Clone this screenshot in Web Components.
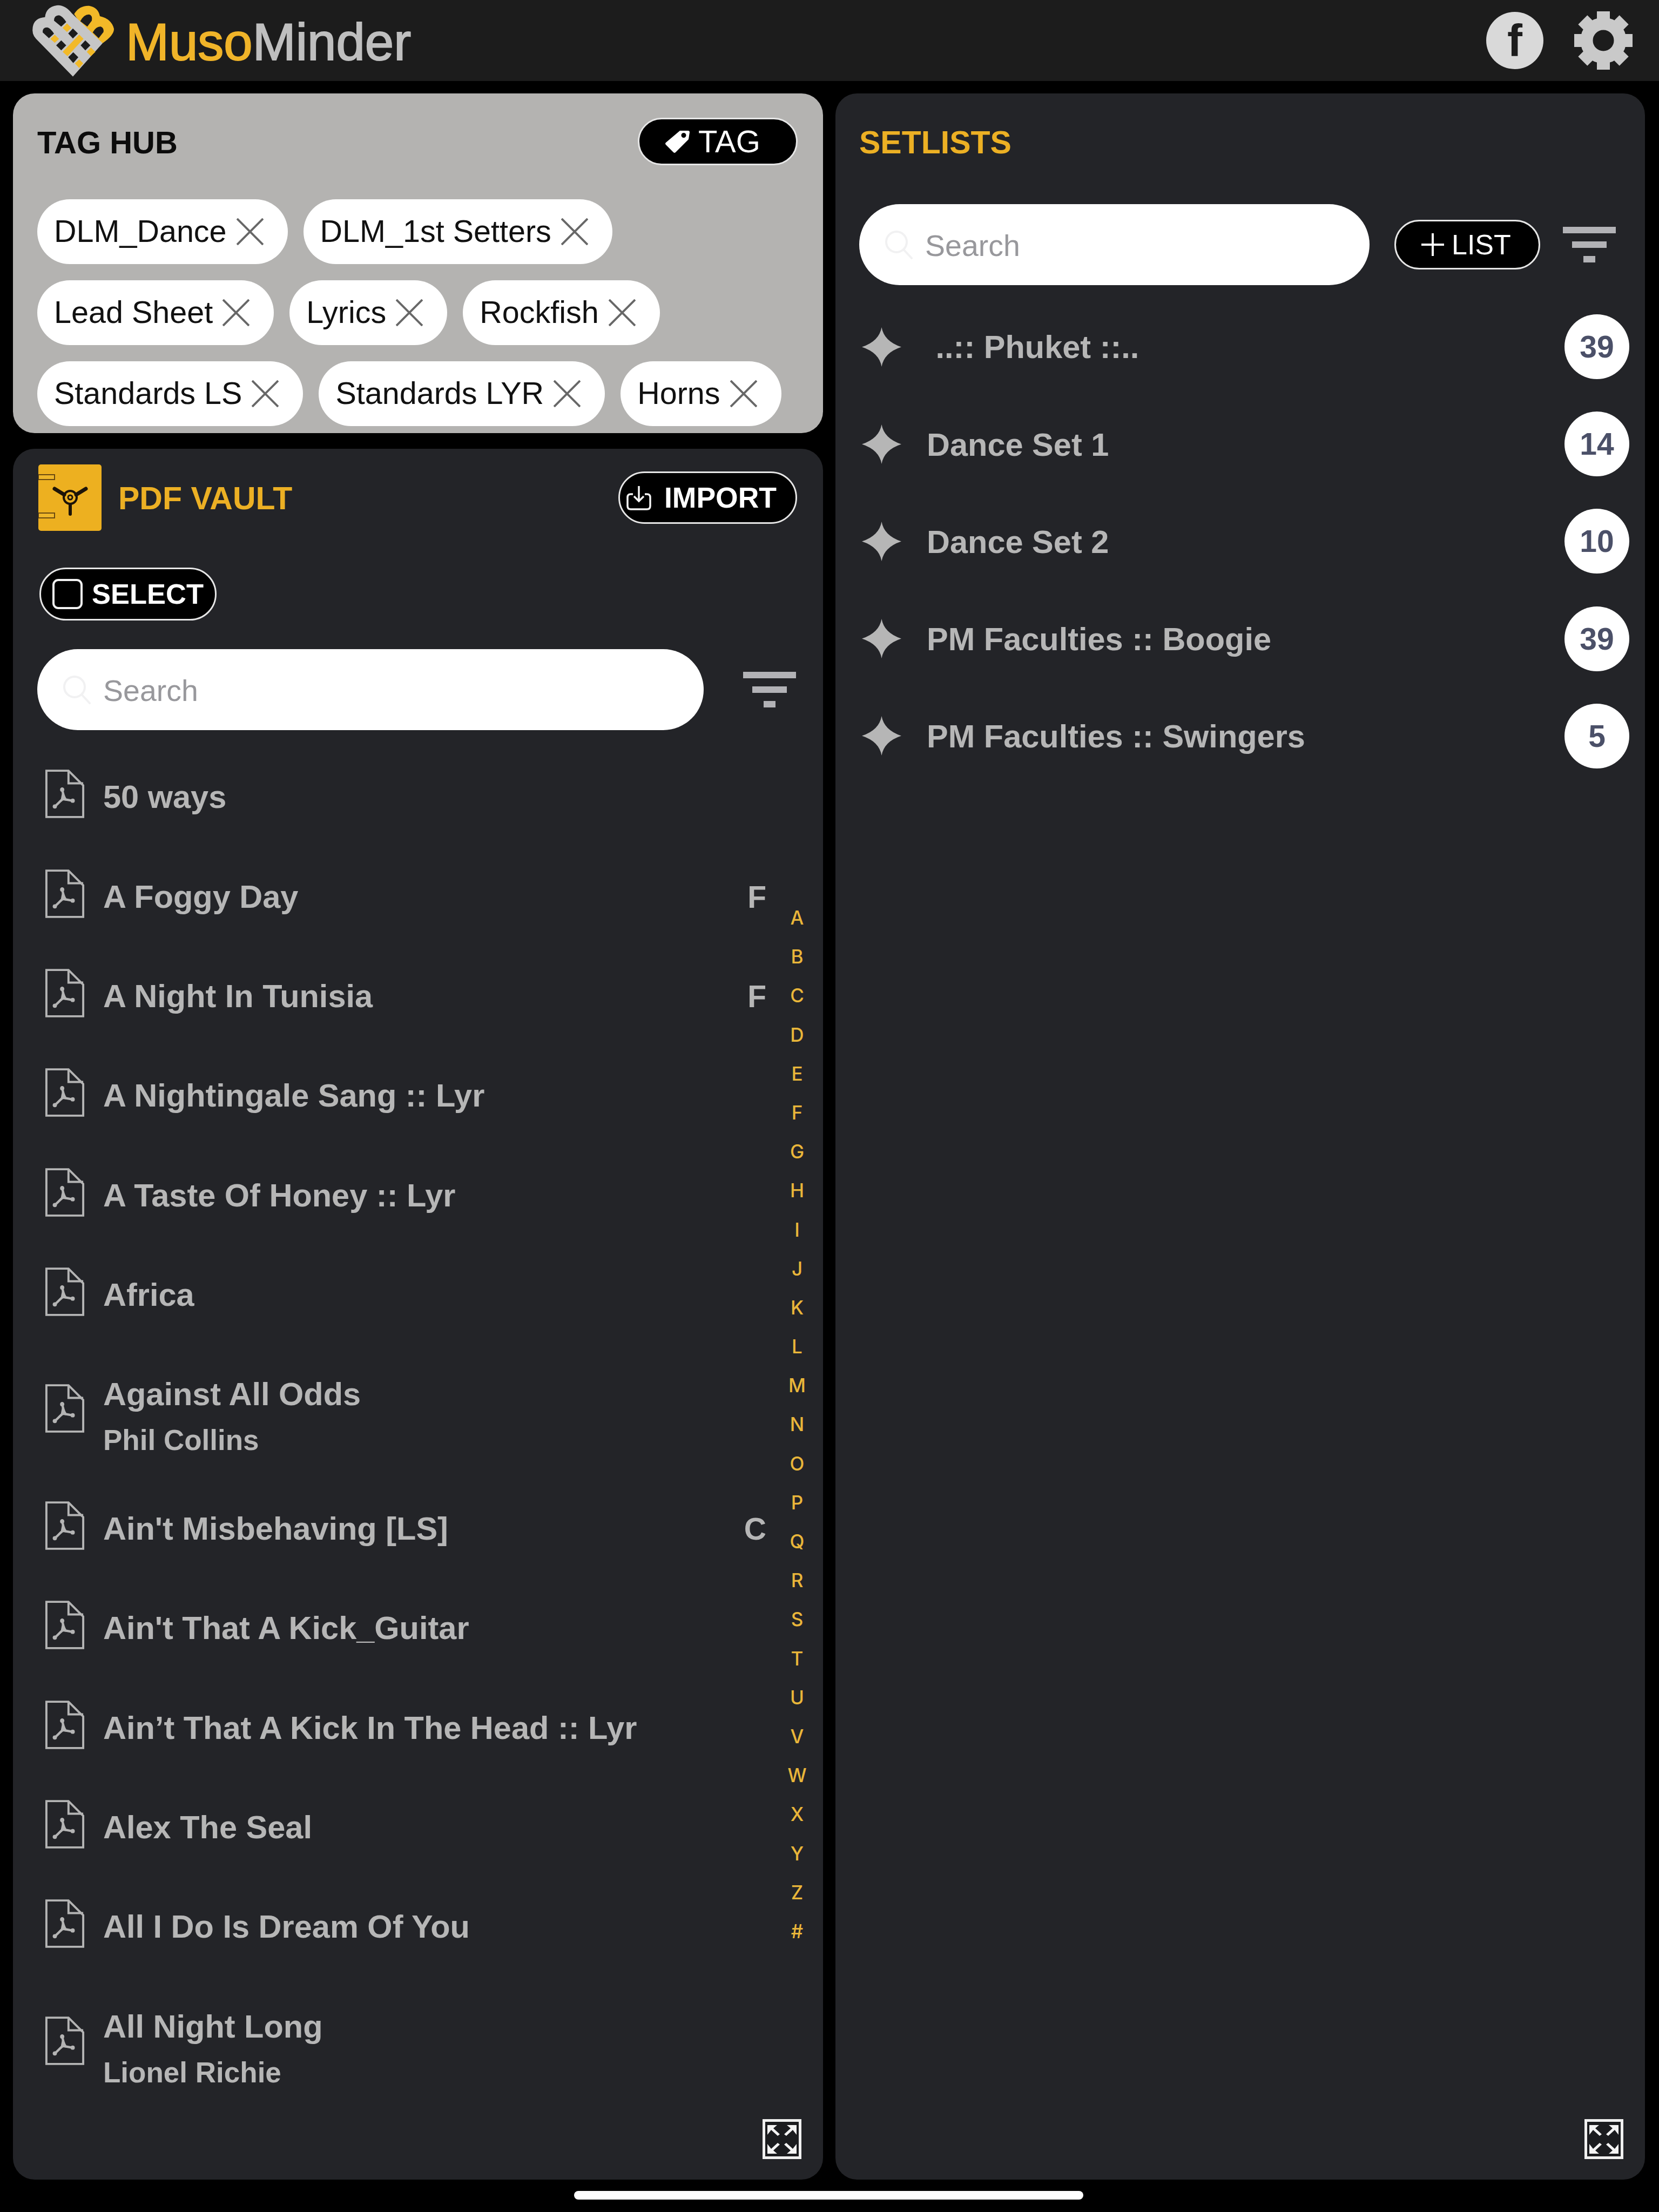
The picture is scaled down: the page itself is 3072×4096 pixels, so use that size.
<!DOCTYPE html>
<html lang="en"><head><meta charset="utf-8"><title>MusoMinder</title>
<style>
html,body{margin:0;padding:0;background:#000}
body{font-family:"Liberation Sans",Arial,sans-serif;width:3072px;height:4096px;overflow:hidden}
</style></head><body>
<mm-app></mm-app>
<script>
const F='"Liberation Sans",Arial,sans-serif';
function def(name,html,setup){
  const t=document.createElement('template');t.innerHTML=html;
  customElements.define(name,class extends HTMLElement{
    constructor(){super();this.attachShadow({mode:'open'}).appendChild(t.content.cloneNode(true));}
    connectedCallback(){if(setup)setup.call(this,this.shadowRoot);}
  });
}
const xIcon='<svg width="50" height="50" viewBox="0 0 50 50"><path d="M1 1L49 49M49 1L1 49" stroke="#686868" stroke-width="4" fill="none"/></svg>';

def('mm-chip',`<style>:host{display:inline-flex;align-items:center;box-sizing:border-box;height:120px;padding:0 45px 0 31px;gap:18px;background:#fff;border-radius:60px;color:#111;font:400 57.500px/1 ${F};white-space:nowrap}svg{display:block;flex:none}</style><slot></slot>${xIcon}`);

def('mm-pill',`<style>:host{display:inline-flex;align-items:center;box-sizing:border-box;flex:none;background:#000;border:3px solid #e6e6e6;border-radius:60px;color:#fff;white-space:nowrap;height:var(--h);width:var(--w);padding-left:var(--pl);gap:var(--g);font:var(--wt,400) var(--fs)/1 ${F}}</style><slot></slot>`);

def('mm-filter',`<style>:host{display:flex;flex-direction:column;align-items:center;flex:none;width:98px;gap:15px}i{display:block;height:12px;background:#b2b2b6}</style><i style="width:98px"></i><i style="width:64px"></i><i style="width:22px"></i>`);

def('mm-search',`<style>:host{display:flex;align-items:center;box-sizing:border-box;height:150px;background:#fff;border-radius:75px;padding-left:47px;gap:23px;color:#98989c;font:400 55.500px/1 ${F};flex:none}svg{display:block;flex:none}span{padding-top:5px}</style>
<svg width="52" height="54" viewBox="0 0 52 54" fill="none" stroke="#f1f1f2" stroke-width="4"><circle cx="22" cy="22" r="19"/><path d="M36 37L50 52" stroke-linecap="round"/></svg><span><slot></slot></span>`);

def('mm-expand',`<style>:host{position:absolute;right:40px;bottom:38px;display:block;width:72px;height:74px}svg{display:block}</style>
<svg width="72" height="74" viewBox="0 0 72 74"><rect x="2.500" y="2.500" width="67" height="69" fill="#1b1c1f" stroke="#f0f0f0" stroke-width="5"/>
<g fill="#f4f4f4" stroke="none"><path d="M9 11H27L20 17L32 28L28 31L16 20L9 29Z"/><path d="M63 11H45L52 17L40 28L44 31L56 20L63 29Z"/><path d="M9 64H27L20 58L32 47L28 44L16 55L9 46Z"/><path d="M63 64H45L52 58L40 47L44 44L56 55L63 46Z"/></g></svg>`);

def('mm-alpha',`<style>:host{position:absolute;left:1432px;top:832px;width:40px;display:block;color:#e9b63a;font:500 35px/72.200px Inter,${F};text-align:center}div{height:72.200px}</style><section></section>`,function(r){
  const s=r.querySelector('section');if(s.children.length)return;
  for(const c of 'ABCDEFGHIJKLMNOPQRSTUVWXYZ#'){const d=document.createElement('div');d.textContent=c;s.appendChild(d);}
});

def('mm-pdf',`<style>:host{display:flex;align-items:center;box-sizing:border-box;padding:59.200px 105px 59.200px 59px;gap:34px;color:#b6b6b6;font:700 59.500px/66px ${F}}
svg{display:block;flex:none;margin:-30px 0 -18px}.t{flex:1;min-width:0}.s{font-size:53px;line-height:64px;margin:20px 0 -20px}.k{flex:none;font-size:57px}</style>
<svg width="74" height="92" viewBox="0 0 76 94" fill="none" stroke="#b4b4b4" stroke-width="4"><path d="M3 3H45L73 31V91H3Z"/><path d="M45 3V27H73"/>
<path d="M33 37C34 45 36 52 39 57M52 60C44 59 38 57 34 57C30 60 25 66 19 71" stroke-width="4.500" stroke-linecap="round"/><circle cx="33" cy="39" r="4" fill="#b4b4b4" stroke="none"/><circle cx="53" cy="60" r="4" fill="#b4b4b4" stroke="none"/><circle cx="19" cy="71" r="4" fill="#b4b4b4" stroke="none"/><path d="M33 44L37 56L30 60Z" fill="#b4b4b4" stroke="none"/></svg>
<div class="t"><div><slot></slot></div><div class="s"><slot name="sub"></slot></div></div><div class="k"><slot name="key"></slot></div>`,function(r){
  if(!this.querySelector('[slot=sub]'))r.querySelector('.s').style.display='none';
});

def('mm-set',`<style>:host{display:flex;align-items:center;box-sizing:border-box;height:180.200px;padding:0 29px 0 5px;color:#b6b6b6;font:700 59.500px/1 ${F}}
svg{display:block;flex:none;margin-right:47px}.t{flex:1;white-space:pre;padding-top:2px}.b{flex:none;width:120px;height:120px;border-radius:60px;background:#fff;color:#4b5068;font:700 57px/120px ${F};text-align:center}</style>
<svg width="73" height="73" viewBox="0 0 73 73"><path d="M36.500 0Q41 26 73 36.500Q41 47 36.500 73Q32 47 0 36.500Q32 26 36.500 0Z" fill="#b6b6b6"/></svg>
<div class="t"><slot></slot></div><div class="b"><slot name="n"></slot></div>`);

def('mm-header',`<style>:host{display:flex;align-items:center;box-sizing:border-box;height:150px;padding:0 49px 0 50px;background:#1c1c1c}
.w{font:400 96px/1 ${F};margin:5px 0 0 13px;-webkit-text-stroke:2px currentColor;flex:1;color:#bfbfbf;white-space:nowrap}.w b{font-weight:400;color:#f0b429}
.fb{width:106px;height:106px;border-radius:53px;background:#d9d9d9;color:#1c1c1c;font:700 84px/106px ${F};text-align:center;margin-right:57px}svg{display:block;flex:none}</style>
<svg width="170" height="150" viewBox="0 0 510 450">
<path d="M262 78Q290 30 345 32Q395 40 405 90Q470 105 483 160Q485 195 420 240L340 200Z" fill="#f2b928"/>
<path d="M255 425L50 215Q25 190 32 150Q40 100 100 95Q105 40 165 30Q210 25 250 75L420 240Z" fill="#c6c6c6"/>
<g fill="#1c1c1c"><path d="M150 115Q150 85 178 85Q195 88 218 122L190 148Z"/><path d="M87 180Q85 152 112 152Q130 155 150 187L122 212Z"/><path d="M296 118Q315 80 345 80Q365 85 360 115L335 148Z"/><path d="M365 180Q385 145 410 148Q428 155 425 178L398 212Z"/>
<path d="M255 158L283 186L255 214L229 186Z"/><path d="M190 224L218 252L190 280L162 252Z"/><path d="M324 224L352 252L324 280L298 252Z"/><path d="M257 290L285 318L257 350L229 318Z"/></g>
<g fill="#f2b928"><path d="M222 130L247 155L222 178L198 155Z"/><path d="M154 193L178 216L154 238L130 216Z"/><path d="M355 264L380 288L355 312L332 288Z"/><path d="M290 330L312 352L290 378L266 352Z"/><path d="M290 192L314 216L225 312L198 288Z"/></g></svg>
<div class="w"><b>Muso</b>Minder</div><div class="fb">f</div>
<svg width="108" height="108" viewBox="-54 -54 108 108" fill="#c9c9c9"><circle r="31" fill="none" stroke="#c9c9c9" stroke-width="23"/>
<g><rect x="-12" y="-54" width="24" height="24"/><rect x="-12" y="-54" width="24" height="24" transform="rotate(45)"/><rect x="-12" y="-54" width="24" height="24" transform="rotate(90)"/><rect x="-12" y="-54" width="24" height="24" transform="rotate(135)"/><rect x="-12" y="-54" width="24" height="24" transform="rotate(180)"/><rect x="-12" y="-54" width="24" height="24" transform="rotate(225)"/><rect x="-12" y="-54" width="24" height="24" transform="rotate(270)"/><rect x="-12" y="-54" width="24" height="24" transform="rotate(315)"/></g></svg>`);

def('mm-taghub',`<style>:host{display:block;box-sizing:border-box;height:629px;background:#b4b3b1;border-radius:40px;padding:45px 47px 0 45px}
.top{display:flex;align-items:center;justify-content:space-between;height:88px;margin-bottom:63px;color:#0c0c0c;font:700 58px/1 ${F}}
.top span{padding-top:4px}.chips{display:flex;flex-wrap:wrap;gap:30px 29px}</style>
<div class="top"><span>TAG HUB</span><slot name="btn"></slot></div><div class="chips"><slot></slot></div>`);

def('mm-vault',`<style>:host{display:block;position:relative;box-sizing:border-box;flex:1;min-height:0;background:#232428;border-radius:40px;padding-top:29px;overflow:hidden}
.h{display:flex;align-items:center;height:123px;padding:0 48px 0 47px;color:#ecb024;font:700 59px/1 ${F}}.h span{flex:1;margin-left:31px;padding-top:3px}
svg{display:block;flex:none}.sel{margin:68px 0 0 49px;display:flex;height:98px}
.q{display:flex;align-items:center;margin:53px 0 32px 45px;height:150px;gap:73px}</style>
<div class="h"><svg width="117" height="123" viewBox="0 0 117 123"><rect width="117" height="123" rx="5" fill="#edb020"/><g fill="#efb62a" stroke="#6b4a10" stroke-width="2"><rect x="0" y="19" width="30" height="9"/><rect x="0" y="90" width="30" height="9"/></g>
<g stroke="#1d1408" fill="none"><path d="M30 45L48 56M88 45L70 56" stroke-width="7" stroke-linecap="round"/><path d="M59 74V92" stroke-width="6" stroke-linecap="round"/><circle cx="59" cy="61" r="12" stroke-width="4"/><circle cx="59" cy="61" r="4" stroke-width="3"/></g></svg>
<span>PDF VAULT</span><slot name="import"></slot></div>
<div class="sel"><slot name="select"></slot></div>
<div class="q"><slot name="search"></slot><mm-filter></mm-filter></div>
<slot></slot><mm-alpha></mm-alpha><mm-expand></mm-expand>`);

def('mm-setlists',`<style>:host{display:block;position:relative;box-sizing:border-box;flex:none;width:1499px;height:3863px;background:#232428;border-radius:40px}
h2{margin:0;height:183px;box-sizing:border-box;padding:63px 0 0 44px;color:#ecb024;font:700 59px/56px ${F}}
.q{display:flex;align-items:center;padding:0 0 0 44px;height:150px;margin:22px 0 24px}.q ::slotted(mm-pill){margin-left:46px}.q mm-filter{margin-left:42px}</style>
<h2>SETLISTS</h2><div class="q"><slot name="search"></slot><slot name="btn"></slot><mm-filter></mm-filter></div>
<div style="padding-left:44px"><slot></slot></div><mm-expand></mm-expand>`);

def('mm-app',`<style>:host{display:block;width:3072px;height:4096px;background:#000}
main{display:flex;gap:23px;padding:23px 0 0 24px;height:3863px}.l{display:flex;flex-direction:column;gap:29px;width:1500px;height:3863px}
.home{width:943px;height:16px;background:#fff;border-radius:8px;margin:21px 0 0 1063px}</style>
<mm-header></mm-header><main><div class="l"><slot name="hub"></slot><slot name="vault"></slot></div><slot name="sets"></slot></main><div class="home"></div>`,function(){
  if(this.children.length)return;
  const chips=['DLM_Dance','DLM_1st Setters','Lead Sheet','Lyrics','Rockfish','Standards LS','Standards LYR','Horns'].map(c=>`<mm-chip>${c}</mm-chip>`).join('');
  const rows=[['50 ways'],['A Foggy Day','','F'],['A Night In Tunisia','','F'],['A Nightingale Sang :: Lyr'],['A Taste Of Honey :: Lyr'],['Africa'],['Against All Odds','Phil Collins'],["Ain't Misbehaving [LS]",'','C'],["Ain't That A Kick_Guitar"],['Ain’t That A Kick In The Head :: Lyr'],['Alex The Seal'],['All I Do Is Dream Of You'],['All Night Long','Lionel Richie']]
   .map(([t,s,k])=>`<mm-pdf>${t}${s?`<span slot="sub">${s}</span>`:''}${k?`<span slot="key">${k}</span>`:''}</mm-pdf>`).join('');
  const sets=[['\u00a0..:: Phuket ::..',39],['Dance Set 1',14],['Dance Set 2',10],['PM Faculties :: Boogie',39],['PM Faculties :: Swingers',5]].map(([t,n])=>`<mm-set>${t}<span slot="n">${n}</span></mm-set>`).join('');
  this.innerHTML=`
  <mm-taghub slot="hub"><mm-pill slot="btn" style="--h:88px;--w:296px;--pl:47px;--g:15px;--fs:58px"><svg width="47" height="44" viewBox="0 0 47 44" style="display:block;flex:none"><path fill-rule="evenodd" fill="#fff" d="M28 2H43Q46 2 46 5L44 18L20 42Q18 44 16 42L2 28Q0 26 2 24ZM35 6A4.500 4.500 0 1 0 35.010 6Z"/></svg><span>TAG</span></mm-pill>${chips}</mm-taghub>
  <mm-vault slot="vault">
    <mm-pill slot="import" style="--h:97px;--w:331px;--pl:12px;--g:24px;--fs:53.500px;--wt:700"><svg width="46" height="46" viewBox="0 0 46 46" fill="none" stroke="#f4f4f4" stroke-width="3.500" style="display:block;flex:none"><path d="M12 16H8Q2 16 2 22V38Q2 44 8 44H38Q44 44 44 38V22Q44 16 38 16H34"/><path d="M23 1V28M14 20L23 29L32 20"/></svg><span>IMPORT</span></mm-pill>
    <mm-pill slot="select" style="--h:98px;--w:328px;--pl:21px;--g:17px;--fs:52.500px;--wt:700"><svg width="56" height="56" viewBox="0 0 56 56" style="display:block;flex:none"><rect x="2" y="2" width="52" height="52" rx="9" fill="none" stroke="#f2f2f2" stroke-width="4"/></svg><span>SELECT</span></mm-pill>
    <mm-search slot="search" style="width:1234px">Search</mm-search>${rows}</mm-vault>
  <mm-setlists slot="sets"><mm-search slot="search" style="width:945px">Search</mm-search>
    <mm-pill slot="btn" style="--h:92px;--w:270px;--pl:47px;--g:14px;--fs:52px"><svg width="42" height="42" viewBox="0 0 42 42" style="display:block;flex:none"><path d="M21 0V42M0 21H42" stroke="#fff" stroke-width="4"/></svg><span>LIST</span></mm-pill>${sets}</mm-setlists>`;
});
</script>
</body></html>
